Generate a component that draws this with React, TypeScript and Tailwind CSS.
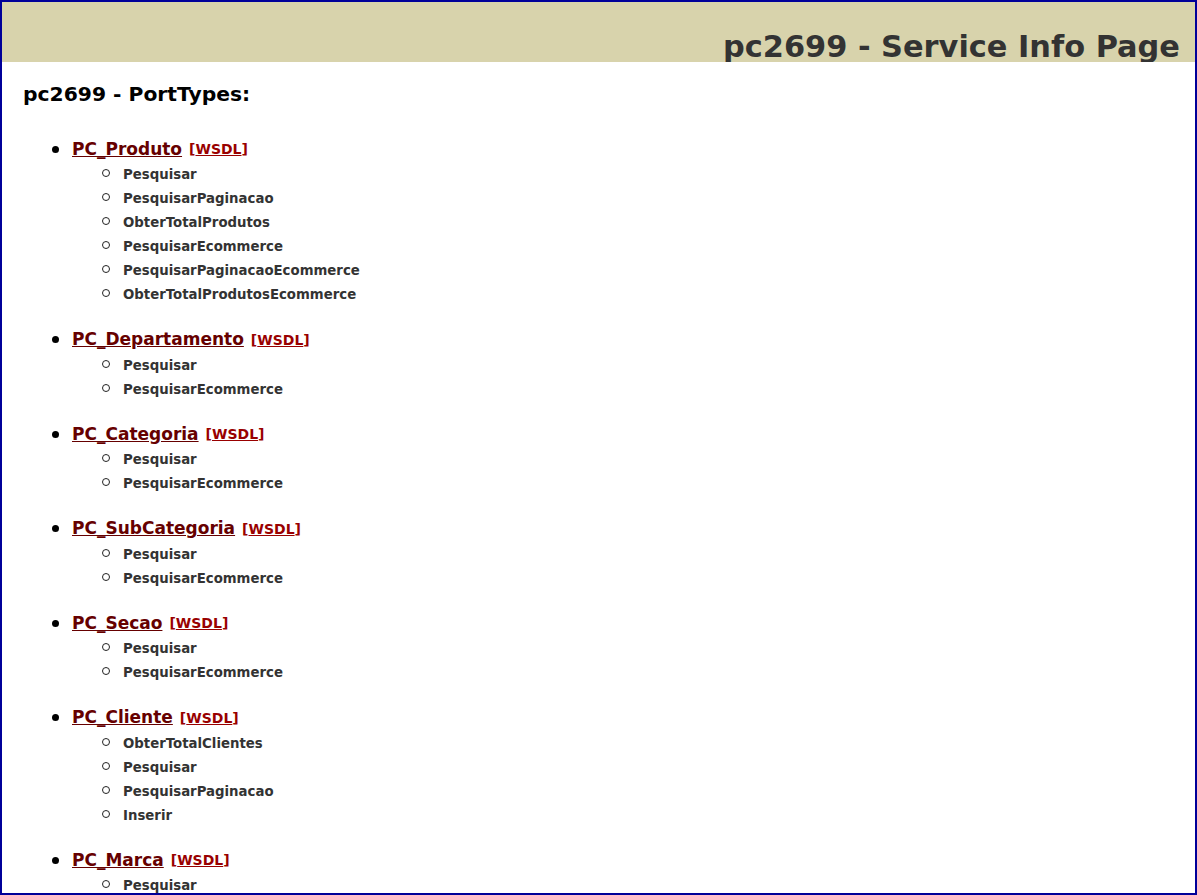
import React from "react";

const PORT_TYPES: { name: string; ops: string[] }[] = [
  {
    name: "PC_Produto",
    ops: [
      "Pesquisar",
      "PesquisarPaginacao",
      "ObterTotalProdutos",
      "PesquisarEcommerce",
      "PesquisarPaginacaoEcommerce",
      "ObterTotalProdutosEcommerce",
    ],
  },
  { name: "PC_Departamento", ops: ["Pesquisar", "PesquisarEcommerce"] },
  { name: "PC_Categoria", ops: ["Pesquisar", "PesquisarEcommerce"] },
  { name: "PC_SubCategoria", ops: ["Pesquisar", "PesquisarEcommerce"] },
  { name: "PC_Secao", ops: ["Pesquisar", "PesquisarEcommerce"] },
  { name: "PC_Cliente", ops: ["ObterTotalClientes", "Pesquisar", "PesquisarPaginacao", "Inserir"] },
  { name: "PC_Marca", ops: ["Pesquisar", "PesquisarEcommerce"] },
];

export default function App() {
  return (
    <div
      className="h-[895px] overflow-hidden border-2 border-[#000099] bg-white font-bold"
      style={{ fontFamily: '"DejaVu Sans", Verdana, sans-serif' }}
    >
      {/* title band */}
      <div className="flex h-[60px] items-end justify-end overflow-hidden bg-[#d8d3ac] pr-[15px]">
        <h1 className="text-[30.4px] leading-none text-[#333333]">pc2699 - Service Info Page</h1>
      </div>

      <div className="px-[21px] pt-[19px]">
        <h2 className="text-[20.3px] leading-[26px] text-black">pc2699 - PortTypes:</h2>

        <ul className="mt-[29px]">
          {PORT_TYPES.map((pt) => (
            <li key={pt.name} className="mb-[19.5px]">
              <div className="flex h-[26px] items-center whitespace-nowrap leading-none">
                <span className="ml-[29px] mr-[13px] h-[7px] w-[7px] shrink-0 rounded-full bg-black" />
                <a href="#" className="text-[17px] text-[#660000] underline">{pt.name}</a>
                <a href="#" className="ml-[7px] text-[14px] text-[#990000]">
                  [<span className="underline">WSDL</span>]
                </a>
              </div>
              <ul className="pt-[1px]">
                {pt.ops.map((op) => (
                  <li key={op} className="flex h-[24px] items-center text-[13.3px] leading-none text-[#333333]">
                    <span className="ml-[79px] mr-[13px] h-[8px] w-[8px] shrink-0 -translate-y-[2px] rounded-full border-[1.5px] border-[#222222]" />
                    {op}
                  </li>
                ))}
              </ul>
            </li>
          ))}
        </ul>
      </div>
    </div>
  );
}
